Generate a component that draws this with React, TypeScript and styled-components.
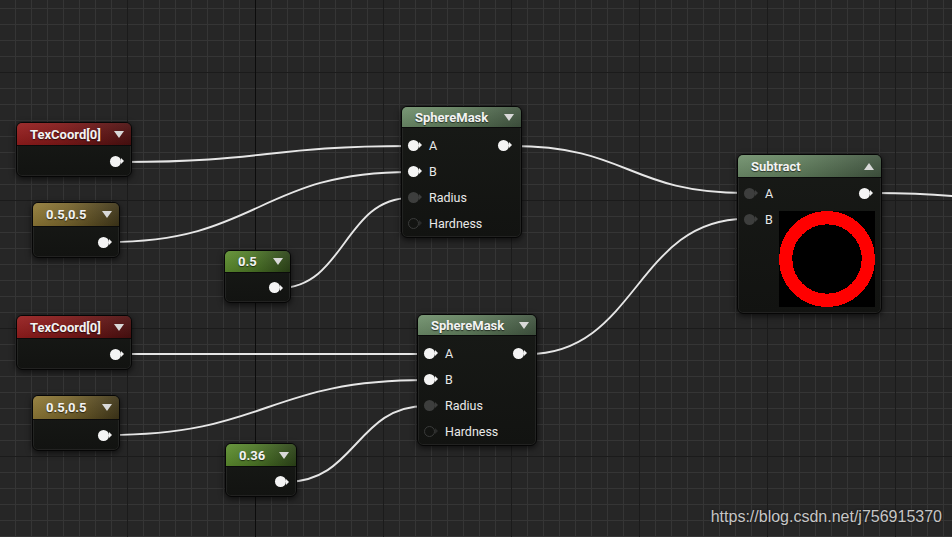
import styled, { createGlobalStyle } from "styled-components";

const GlobalStyle = createGlobalStyle`
  html, body {
    margin: 0;
    padding: 0;
    background: #262626;
    overflow: hidden;
  }
  body {
    font-family: Roboto, "Liberation Sans", sans-serif;
  }
`;

type Kind = "red" | "gold" | "green" | "mat";
type PinState = "on" | "dim" | "empty";

const headerColors: Record<Kind, string> = {
  red: "linear-gradient(90deg, #961d1d 0%, #801818 40%, #4b1010 100%)",
  gold: "linear-gradient(90deg, #917b37 0%, #79662d 40%, #3f3619 100%)",
  green: "linear-gradient(90deg, #5e8f2f 0%, #4e7927 40%, #2c4318 100%)",
  mat: "linear-gradient(90deg, #70906c 0%, #63815f 40%, #425641 100%)",
};

const pinColors: Record<PinState, string> = {
  on: "#f4f4f4",
  dim: "#3d3e3d",
  empty: "transparent",
};

const Canvas = styled.div`
  position: relative;
  width: 952px;
  height: 537px;
  overflow: hidden;
  background-color: #262626;
  background-image:
    linear-gradient(90deg, transparent 255px, #0c0c0c 255px, #0c0c0c 256px, transparent 256px),
    linear-gradient(90deg, #1b1b1b 1px, transparent 1px),
    linear-gradient(180deg, #1b1b1b 1px, transparent 1px),
    linear-gradient(90deg, #353535 1px, transparent 1px),
    linear-gradient(180deg, #353535 1px, transparent 1px);
  background-size: 100% 100%, 128px 128px, 128px 128px, 16px 16px, 16px 16px;
  background-position: 0 0, 127px 0, 0 72px, 15px 0, 0 8px;
`;

const Wires = styled.svg`
  position: absolute;
  inset: 0;
  pointer-events: none;
`;

const NodeBox = styled.div<{ $x: number; $y: number; $w: number }>`
  position: absolute;
  left: ${(p) => p.$x}px;
  top: ${(p) => p.$y}px;
  width: ${(p) => p.$w}px;
  box-sizing: border-box;
  border: 1px solid #060606;
  border-radius: 6px;
  overflow: hidden;
  background: linear-gradient(180deg, #181a17 0%, #121311 100%);
  box-shadow: inset 0 0 0 1px rgba(90, 90, 90, 0.22), 0 2px 6px rgba(0, 0, 0, 0.65);
`;

const Header = styled.div<{ $kind: Kind; $h: number }>`
  box-sizing: border-box;
  height: ${(p) => p.$h}px;
  display: flex;
  align-items: center;
  justify-content: space-between;
  padding: 0 7px 0 13px;
  background: linear-gradient(180deg, rgba(255, 255, 255, 0.07) 0%, rgba(0, 0, 0, 0.12) 100%),
    ${(p) => headerColors[p.$kind]};
  border-bottom: 1px solid #0b0b0b;
  color: #f3f3f3;
  font-size: 13px;
  font-weight: 700;
  white-space: nowrap;
  text-shadow: 0 1px 1px rgba(0, 0, 0, 0.6);
`;

const Caret = styled.span<{ $up?: boolean }>`
  width: 0;
  height: 0;
  border-left: 5px solid transparent;
  border-right: 5px solid transparent;
  ${(p) => (p.$up ? "border-bottom" : "border-top")}: 7px solid #d9d9d9;
`;

const ConstBody = styled.div<{ $h: number }>`
  height: ${(p) => p.$h}px;
  display: flex;
  align-items: center;
  justify-content: flex-end;
  padding-right: 6px;
`;

const Pin = styled.span<{ $state: PinState }>`
  position: relative;
  flex: none;
  display: inline-block;
  width: 15px;
  height: 11px;

  &::before {
    content: "";
    position: absolute;
    left: 0;
    top: 0;
    box-sizing: border-box;
    width: 11px;
    height: 11px;
    border-radius: 50%;
    background: ${(p) => pinColors[p.$state]};
    border: ${(p) => (p.$state === "empty" ? "1.5px solid #3a3b3a" : "none")};
  }

  &::after {
    content: "";
    position: absolute;
    left: 11px;
    top: 2.5px;
    border-top: 3px solid transparent;
    border-bottom: 3px solid transparent;
    border-left: 3px solid ${(p) => (p.$state === "empty" ? "#2a2b2a" : pinColors[p.$state])};
  }
`;

const MatBody = styled.div<{ $top: number; $bottom: number }>`
  display: flex;
  justify-content: space-between;
  padding: ${(p) => p.$top}px 0 ${(p) => p.$bottom}px;
`;

const Column = styled.div`
  display: flex;
  flex-direction: column;
`;

const RightColumn = styled.div<{ $pad: number }>`
  display: flex;
  flex-direction: column;
  align-items: flex-end;
  padding-right: ${(p) => p.$pad}px;
`;

const InputRow = styled.div`
  height: 26px;
  display: flex;
  align-items: center;
  gap: 6px;
  padding-left: 6px;
  color: #e9e9e9;
  font-size: 12.5px;
  white-space: nowrap;
`;

const OutputRow = styled.div<{ $pad?: number }>`
  height: 26px;
  display: flex;
  align-items: center;
  padding-right: ${(p) => p.$pad ?? 0}px;
`;

const Preview = styled.svg`
  display: block;
  margin-top: 5px;
  background: #000;
`;

const Watermark = styled.div`
  position: absolute;
  right: 10px;
  bottom: 11px;
  font-family: "Liberation Sans", Arial, sans-serif;
  font-size: 16px;
  color: #c6c6c6;
  text-shadow: 0 0 2px rgba(0, 0, 0, 0.6);
`;

interface ConstNodeProps {
  x: number;
  y: number;
  w: number;
  kind: Kind;
  title: string;
  head: number;
  body: number;
}

function ConstNode({ x, y, w, kind, title, head, body }: ConstNodeProps) {
  return (
    <NodeBox $x={x} $y={y} $w={w}>
      <Header $kind={kind} $h={head}>
        <span>{title}</span>
        <Caret />
      </Header>
      <ConstBody $h={body}>
        <Pin $state="on" />
      </ConstBody>
    </NodeBox>
  );
}

const sphereInputs: [string, PinState][] = [
  ["A", "on"],
  ["B", "on"],
  ["Radius", "dim"],
  ["Hardness", "empty"],
];

function SphereMask({ x, y, w }: { x: number; y: number; w: number }) {
  return (
    <NodeBox $x={x} $y={y} $w={w}>
      <Header $kind="mat" $h={21}>
        <span>SphereMask</span>
        <Caret />
      </Header>
      <MatBody $top={4} $bottom={1}>
        <Column>
          {sphereInputs.map(([label, state]) => (
            <InputRow key={label}>
              <Pin $state={state} />
              {label}
            </InputRow>
          ))}
        </Column>
        <RightColumn $pad={8}>
          <OutputRow>
            <Pin $state="on" />
          </OutputRow>
        </RightColumn>
      </MatBody>
    </NodeBox>
  );
}

function Subtract() {
  return (
    <NodeBox $x={737} $y={154} $w={145}>
      <Header $kind="mat" $h={23}>
        <span>Subtract</span>
        <Caret $up />
      </Header>
      <MatBody $top={2} $bottom={6}>
        <Column>
          <InputRow>
            <Pin $state="dim" />A
          </InputRow>
          <InputRow>
            <Pin $state="dim" />B
          </InputRow>
        </Column>
        <RightColumn $pad={6}>
          <OutputRow $pad={1}>
            <Pin $state="on" />
          </OutputRow>
          <Preview width={96} height={96} viewBox="0 0 96 96" shapeRendering="crispEdges">
            <circle cx={48} cy={48} r={41.3} fill="none" stroke="#ff0000" strokeWidth={13.2} />
          </Preview>
        </RightColumn>
      </MatBody>
    </NodeBox>
  );
}

const wire = (x1: number, y1: number, x2: number, y2: number) => {
  const t = Math.max(Math.abs(x2 - x1) * 0.5, 30);
  return `M${x1} ${y1} C${x1 + t} ${y1} ${x2 - t} ${y2} ${x2} ${y2}`;
};

const links: [number, number, number, number][] = [
  [124, 162, 410, 146],
  [108, 242, 410, 172],
  [279, 288, 410, 198],
  [512, 146, 745, 193],
  [124, 354, 426, 354],
  [108, 435, 426, 380],
  [286, 482, 426, 406],
  [528, 354, 745, 219],
  [874, 193, 1150, 214],
];

export default function App() {
  return (
    <>
      <GlobalStyle />
      <Canvas>
        <Wires width={952} height={537}>
          {links.map((l, i) => (
            <path key={i} d={wire(...l)} fill="none" stroke="#e6e6e6" strokeWidth={1.9} />
          ))}
        </Wires>

        <ConstNode x={16} y={122} w={116} kind="red" title="TexCoord[0]" head={23} body={30} />
        <ConstNode x={32} y={202} w={88} kind="gold" title="0.5,0.5" head={24} body={30} />
        <ConstNode x={224} y={250} w={67} kind="green" title="0.5" head={22} body={29} />
        <ConstNode x={16} y={315} w={116} kind="red" title="TexCoord[0]" head={23} body={30} />
        <ConstNode x={32} y={395} w={88} kind="gold" title="0.5,0.5" head={24} body={30} />
        <ConstNode x={225} y={443} w={72} kind="green" title="0.36" head={23} body={29} />

        <SphereMask x={401} y={106} w={121} />
        <SphereMask x={417} y={314} w={120} />
        <Subtract />

        <Watermark>https://blog.csdn.net/j756915370</Watermark>
      </Canvas>
    </>
  );
}
